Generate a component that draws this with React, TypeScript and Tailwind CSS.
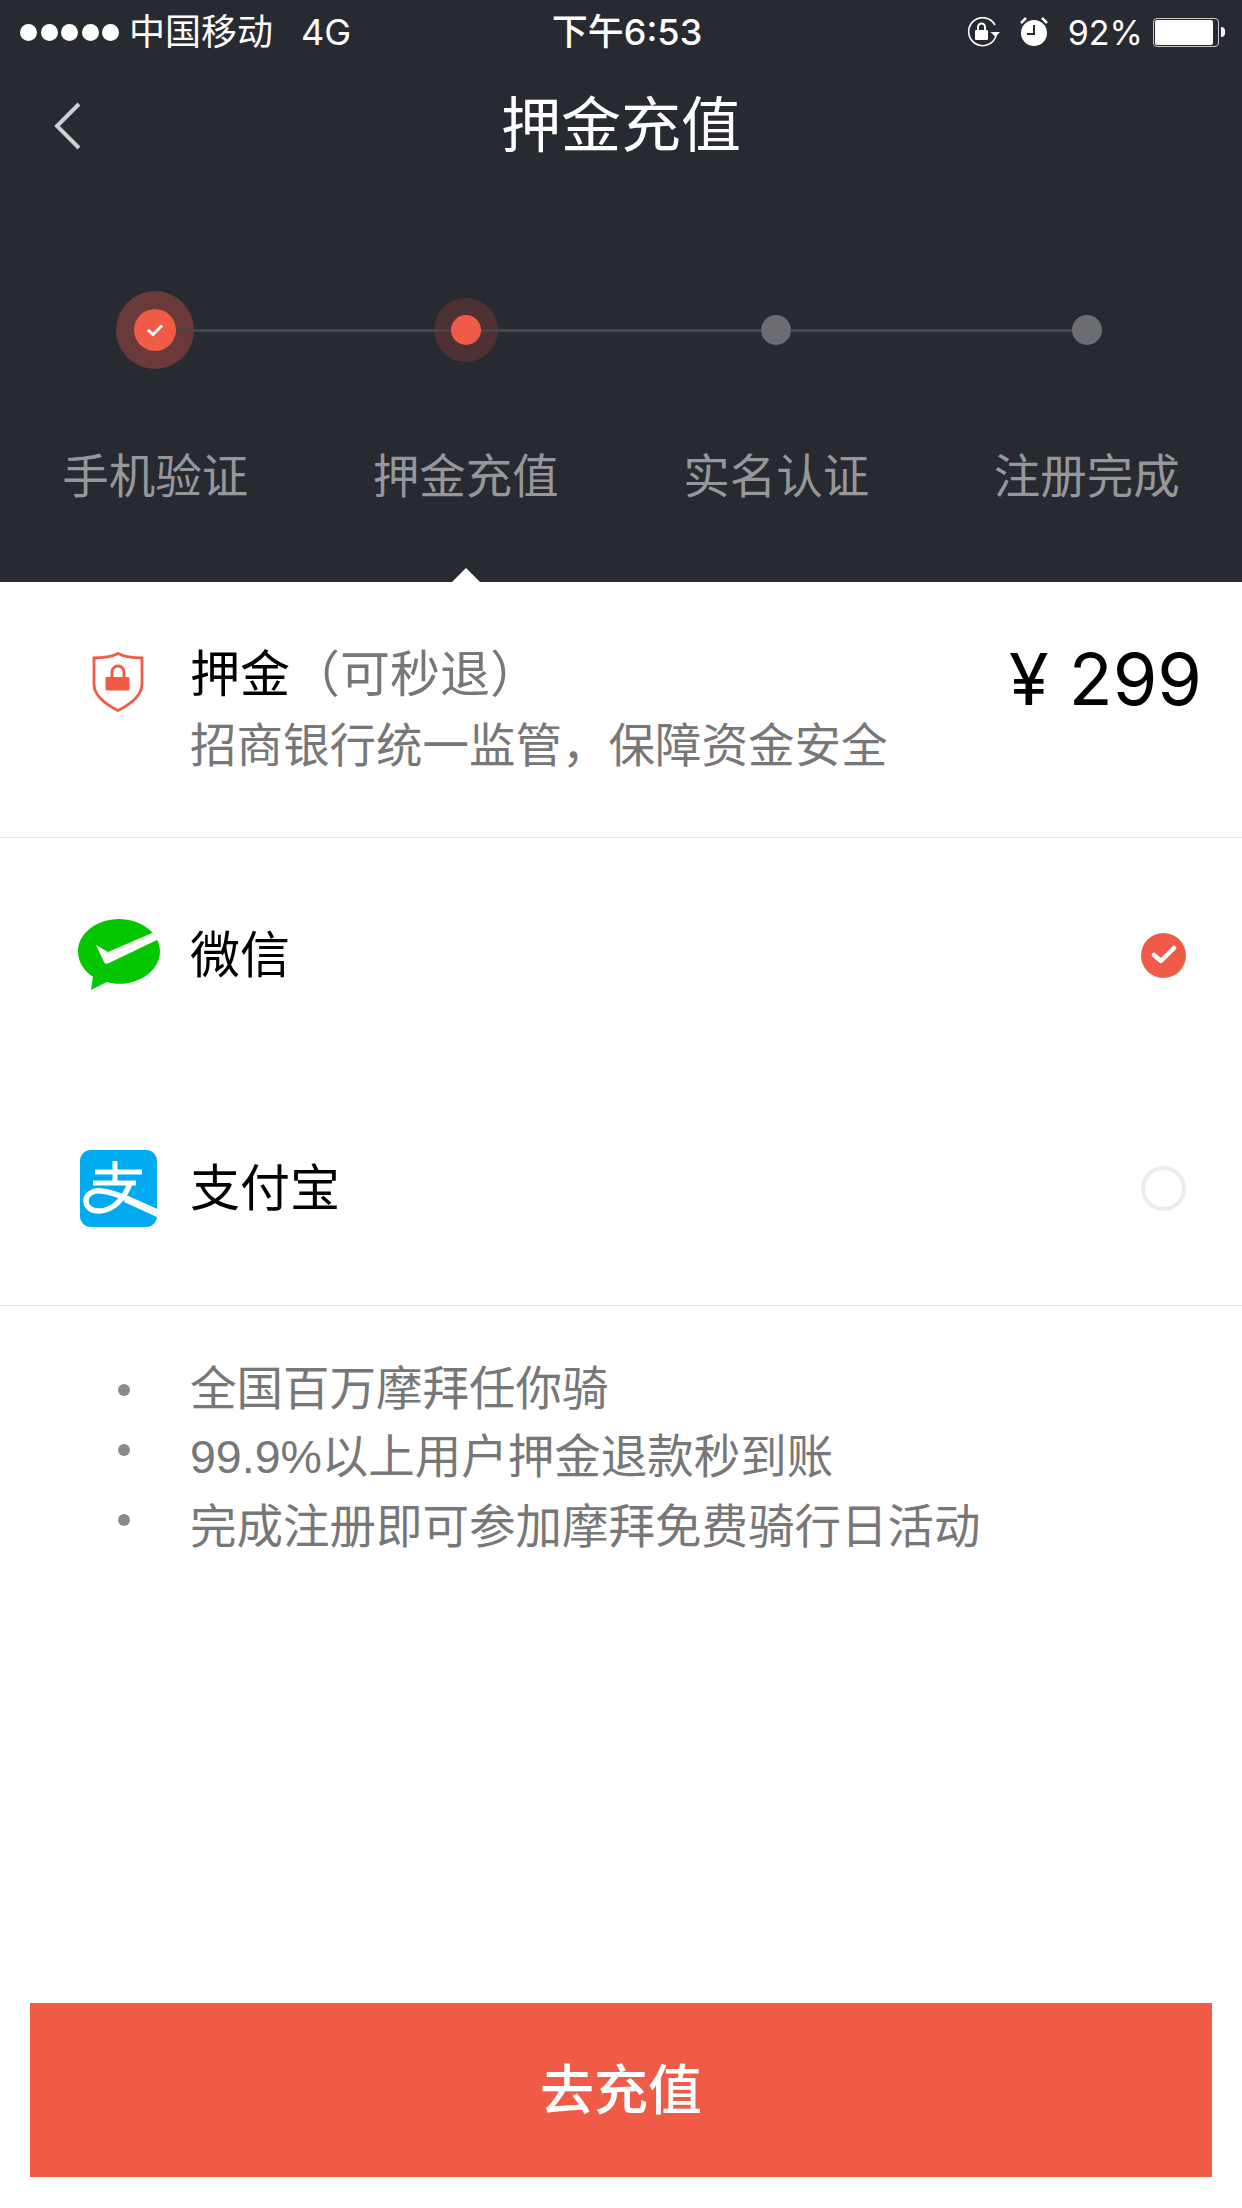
const cjk = "font-['Inter','Noto_Sans_CJK_SC',sans-serif]";

function Step({ label, state }: { label: string; state: 'done' | 'active' | 'todo' }) {
  return (
    <div className="flex flex-col items-center">
      <div className="relative flex h-[78px] w-[78px] items-center justify-center">
        {state === 'done' && <div className="absolute h-[78px] w-[78px] rounded-full bg-[#693a39]" />}
        {state === 'active' && <div className="absolute h-[64px] w-[64px] rounded-full bg-[#4e3132]" />}
        {state === 'done' && (
          <div className="relative z-20 flex h-[42px] w-[42px] items-center justify-center rounded-full bg-[#f05b48]">
            <svg width="18" height="14" viewBox="0 0 18 14" fill="none">
              <path d="M2 7l5 4.500L16 2.500" stroke="#fff" strokeWidth="3" />
            </svg>
          </div>
        )}
        {state === 'active' && <div className="relative z-20 h-[30px] w-[30px] rounded-full bg-[#f05b48]" />}
        {state === 'todo' && <div className="relative z-20 h-[30px] w-[30px] rounded-full bg-[#6b6d72]" />}
      </div>
      <div className="mt-[77px] text-[46.500px] leading-[60px] text-[#96979a]">{label}</div>
    </div>
  );
}

function WeChat() {
  return (
    <svg width="82" height="72" viewBox="0 0 82 72">
      <path d="M41 0C18.500 0 0 14.600 0 32.500c0 10.600 6.300 19.900 15 25.300L13 71l15.600-8c4 1.200 8.300 1.800 12.400 1.800 22.600 0 41-14.600 41-32.300C82 14.600 63.600 0 41 0z" fill="#04c700" />
      <path d="M18 26l12 7L74 14l7 6-50 24q-4 2-5-1z" fill="#fff" />
    </svg>
  );
}

function Alipay() {
  return (
    <svg width="77" height="77" viewBox="0 0 77 77">
      <rect width="77" height="77" rx="11" fill="#00aaee" />
      <path d="M15 22h47M35 11v22M13 33h43" stroke="#fff" strokeWidth="5" fill="none" />
      <path d="M50 33C45 48 33 61 19 61 11 61 6 57 6 51c0-7 7-11 15-10 13 1 29 9 56 21" stroke="#fff" strokeWidth="5.500" fill="none" />
      <path d="M48 46l29 13v8L44 52z" fill="#fff" />
    </svg>
  );
}

export default function App() {
  return (
    <div className={`flex h-[2208px] w-[1242px] flex-col overflow-hidden bg-white ${cjk}`}>
      <header className="relative h-[582px] bg-[#272a31] text-white">
        <div className="flex h-[64px] items-center justify-between">
          <div className="flex w-[406px] items-center pl-[20px] text-[36px]">
            <div className="flex gap-[3.500px]">
              {[0, 1, 2, 3, 4].map((i) => (
                <div key={i} className="h-[17px] w-[17px] rounded-full bg-white" />
              ))}
            </div>
            <span className="ml-[10px]">中国移动</span>
            <span className="ml-[28px]">4G</span>
          </div>
          <div className="text-[36px] font-medium">下午6:53</div>
          <div className="flex w-[394px] items-center justify-end pr-[17px]">
            <svg width="34" height="30" viewBox="0 0 34 30" fill="none">
              <path d="M30 19A14 14 0 1 1 29 8" stroke="#fff" strokeWidth="1.600" />
              <path d="M34 15l-4.500 5-5-5z" fill="#fff" />
              <rect x="9" y="13" width="13" height="10" rx="1" fill="#fff" />
              <path d="M12 13V10a3.500 3.500 0 0 1 7 0v3" stroke="#fff" strokeWidth="2" />
            </svg>
            <svg className="ml-[20px] mb-[2px]" width="28" height="30" viewBox="0 0 28 30">
              <circle cx="14" cy="17" r="13" fill="#fff" />
              <path d="M14 9v9H7" stroke="#272a31" strokeWidth="2" fill="none" />
              <path d="M1 7l5-5M27 7l-5-5" stroke="#fff" strokeWidth="2.500" />
            </svg>
            <span className="ml-[20px] text-[34px]">92%</span>
            <div className="ml-[10px] flex h-[29px] w-[66px] items-center rounded-[4px] border border-[#c8c8ca] p-[1px]">
              <div className="h-full w-[58px] rounded-[2px] bg-white" />
            </div>
            <div className="ml-[2px] h-[10px] w-[4px] rounded-r-full bg-white" />
          </div>
        </div>
        <div className="relative flex h-[122px] items-center justify-center text-[60px]">
          <svg className="absolute left-[52px] top-[37px]" width="30" height="50" viewBox="0 0 30 50" fill="none">
            <path d="M27 3L5 25l22 22" stroke="#cfcfd1" strokeWidth="4" />
          </svg>
          押金充值
        </div>
        <div className="relative mt-[105px] grid grid-cols-4">
          <div className="absolute left-[155px] right-[156px] top-[37.500px] z-10 h-[3px] bg-[#45474d]" />
          <Step label="手机验证" state="done" />
          <Step label="押金充值" state="active" />
          <Step label="实名认证" state="todo" />
          <Step label="注册完成" state="todo" />
        </div>
        <div className="absolute bottom-0 left-[452px] h-0 w-0 border-x-[14px] border-b-[14px] border-x-transparent border-b-white" />
      </header>

      <section className="flex h-[256px] border-b-[1.500px] border-[#e4e4e4] pl-[92px] pr-[40px]">
        <svg className="mr-[46px] mt-[70px] shrink-0" width="52" height="60" viewBox="0 0 52 60">
          <path d="M26 1.500C20 4.500 11 6 2 6v26c0 11 10 19.500 24 26.500 14-7 24-15.500 24-26.500V6C41 6 32 4.500 26 1.500z" fill="none" stroke="#f05b48" strokeWidth="2.800" />
          <rect x="13.500" y="25" width="24" height="13.500" rx="1.500" fill="#f05b48" />
          <path d="M20 26v-6a6 6 0 0 1 12 0v6" fill="none" stroke="#f05b48" strokeWidth="3" />
        </svg>
        <div className="flex-1 pt-[58px]">
          <div className="text-[50px] leading-[68px] text-black">
            押金<span className="text-[#777]">（可秒退）</span>
          </div>
          <div className="mt-[3px] text-[46.500px] leading-[68px] text-[#777]">招商银行统一监管，保障资金安全</div>
        </div>
        <div className="pt-[52px] text-[72px] leading-[90px] text-black">¥ 299</div>
      </section>

      <section className="flex h-[468px] flex-col border-b-[1.500px] border-[#e4e4e4]">
        <div className="mt-[77px] flex h-[80px] items-center pr-[56px]">
          <div className="ml-[78px] flex w-[112px] shrink-0">
            <WeChat />
          </div>
          <div className="flex-1 text-[50px] text-black">微信</div>
          <div className="flex h-[45px] w-[45px] items-center justify-center rounded-full bg-[#f05b48]">
            <svg width="26" height="20" viewBox="0 0 26 20" fill="none">
              <path d="M3 10l7 6L23 3" stroke="#fff" strokeWidth="4.500" strokeLinecap="round" strokeLinejoin="round" />
            </svg>
          </div>
        </div>
        <div className="mt-[153px] flex h-[80px] items-center pr-[56px]">
          <div className="ml-[80px] flex w-[110px] shrink-0">
            <Alipay />
          </div>
          <div className="flex-1 text-[50px] text-black">支付宝</div>
          <div className="h-[45px] w-[45px] rounded-full border-[4px] border-[#ececec]" />
        </div>
      </section>

      <ul className="flex-1 pl-[118px] pt-[50px] font-['Liberation_Sans','Noto_Sans_CJK_SC',sans-serif] text-[46.500px] text-[#777]">
        <li className="flex h-[68px] items-center">
          <span className="mr-[60px] h-[12px] w-[12px] rounded-full bg-[#8a8a8a]" />
          全国百万摩拜任你骑
        </li>
        <li className="flex h-[68px] items-center">
          <span className="mb-[16px] mr-[60px] h-[12px] w-[12px] rounded-full bg-[#8a8a8a]" />
          99.9%以上用户押金退款秒到账
        </li>
        <li className="flex h-[72px] items-center">
          <span className="mb-[16px] mr-[60px] h-[12px] w-[12px] rounded-full bg-[#8a8a8a]" />
          完成注册即可参加摩拜免费骑行日活动
        </li>
      </ul>

      <div className="px-[30px] pb-[31px]">
        <button className="h-[174px] w-full bg-[#f05b48] text-[54px] font-medium text-white">去充值</button>
      </div>
    </div>
  );
}
